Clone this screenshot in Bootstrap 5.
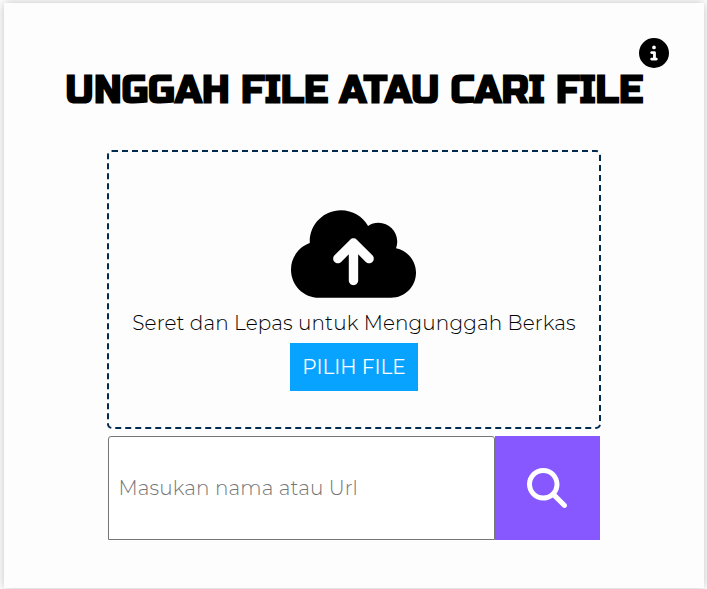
<!DOCTYPE html>
<html lang="id">
<head>
<meta charset="utf-8">
<meta name="viewport" content="width=device-width, initial-scale=1">
<title>Unggah File atau Cari File</title>
<link href="https://cdn.jsdelivr.net/npm/bootstrap@5.3.0/dist/css/bootstrap.min.css" rel="stylesheet">
<style>
body{font-family:Montserrat,Inter,sans-serif;font-weight:400;font-size:20px;color:#000;background:#fff;height:589px;overflow:hidden}
.panel{width:700px;height:585px;margin:3px 0 0 4px;background:#fdfdfd;box-shadow:0 0 10px rgba(0,0,0,.25)}
.info-btn{top:35px;right:35px;width:30px;height:30px}
.headline{font-family:"Russo One",Inter,sans-serif;font-weight:700;font-size:38.5px;line-height:48px;padding-top:64.4px;letter-spacing:-.3px}
.work-area{width:494px;margin-top:34.2px}
.drop-zone{height:279.5px;border:2px dashed #002b50;border-radius:5px;padding-top:52px}
.drop-zone svg{margin-right:1px}
.drop-text{line-height:24px;margin-top:7.4px;font-weight:300;letter-spacing:.12px}
.pick{width:128px;height:48px;margin-top:8px;background:#08a2ff}
.search-row{height:104.500px;margin:6.9px 1px 0}
.search-row .form-control{font-size:20px;font-weight:300;letter-spacing:.12px;border:1px solid #767676;border-radius:3px 3px 0 0;padding:0 9.5px;height:104px;background:#fff}
.search-row .form-control::placeholder{color:#757575;opacity:1}
.find{width:105px;background:#8758ff}
.find svg{margin:0 2px 0 0}
</style>
<script src="https://cdn.jsdelivr.net/npm/bootstrap@5.3.0/dist/js/bootstrap.bundle.min.js"></script>
</head>
<body>
<main class="panel position-relative d-flex flex-column align-items-center">
  <button class="info-btn btn p-0 border-0 position-absolute d-flex" aria-label="Info">
    <svg width="30" height="30" viewBox="0 0 512 512"><path d="M256 512A256 256 0 1 0 256 0a256 256 0 1 0 0 512zM216 336h24V272H216c-13.300 0-24-10.700-24-24s10.700-24 24-24h48c13.300 0 24 10.700 24 24v88h8c13.300 0 24 10.700 24 24s-10.700 24-24 24H216c-13.300 0-24-10.700-24-24s10.700-24 24-24zm40-208a32 32 0 1 1 0 64 32 32 0 1 1 0-64z"/></svg>
  </button>
  <h1 class="headline m-0 text-nowrap">UNGGAH FILE ATAU CARI FILE</h1>
  <section class="work-area">
    <div class="drop-zone d-flex flex-column align-items-center">
      <svg class="flex-shrink-0" width="125" height="100" viewBox="0 0 640 512"><path d="M144 480C64.500 480 0 415.500 0 336c0-62.800 40.200-116.200 96.200-135.900c-.1-2.700-.2-5.400-.2-8.100c0-88.400 71.600-160 160-160c59.300 0 111 32.200 138.700 80.200C409.900 102 428.300 96 448 96c53 0 96 43 96 96c0 12.200-2.300 23.800-6.400 34.600C596 238.400 640 290.100 640 352c0 70.700-57.300 128-128 128H144zm79-217c-9.400 9.400-9.400 24.600 0 33.900s24.600 9.400 33.900 0l39-39V392c0 13.300 10.700 24 24 24s24-10.700 24-24V257.900l39 39c9.400 9.400 24.600 9.400 33.900 0s9.400-24.600 0-33.900l-80-80c-9.400-9.400-24.600-9.400-33.900 0l-80 80z"/></svg>
      <div class="drop-text text-nowrap">Seret dan Lepas untuk Mengunggah Berkas</div>
      <button class="pick border-0 rounded-0 p-0 text-white">PILIH FILE</button>
    </div>
    <form class="search-row d-flex">
      <input class="form-control" type="text" placeholder="Masukan nama atau Url">
      <button class="find btn border-0 rounded-0 p-0 flex-shrink-0 d-flex align-items-center justify-content-center" type="button" aria-label="Cari">
        <svg width="40" height="40" viewBox="0 0 512 512" fill="#fff"><path d="M416 208c0 45.900-14.900 88.300-40 122.700L502.600 457.400c12.500 12.500 12.500 32.800 0 45.300s-32.800 12.500-45.300 0L330.700 376c-34.400 25.200-76.800 40-122.700 40C93.100 416 0 322.900 0 208S93.100 0 208 0S416 93.100 416 208zM208 352a144 144 0 1 0 0-288 144 144 0 1 0 0 288z"/></svg>
      </button>
    </form>
  </section>
</main>
</body>
</html>
